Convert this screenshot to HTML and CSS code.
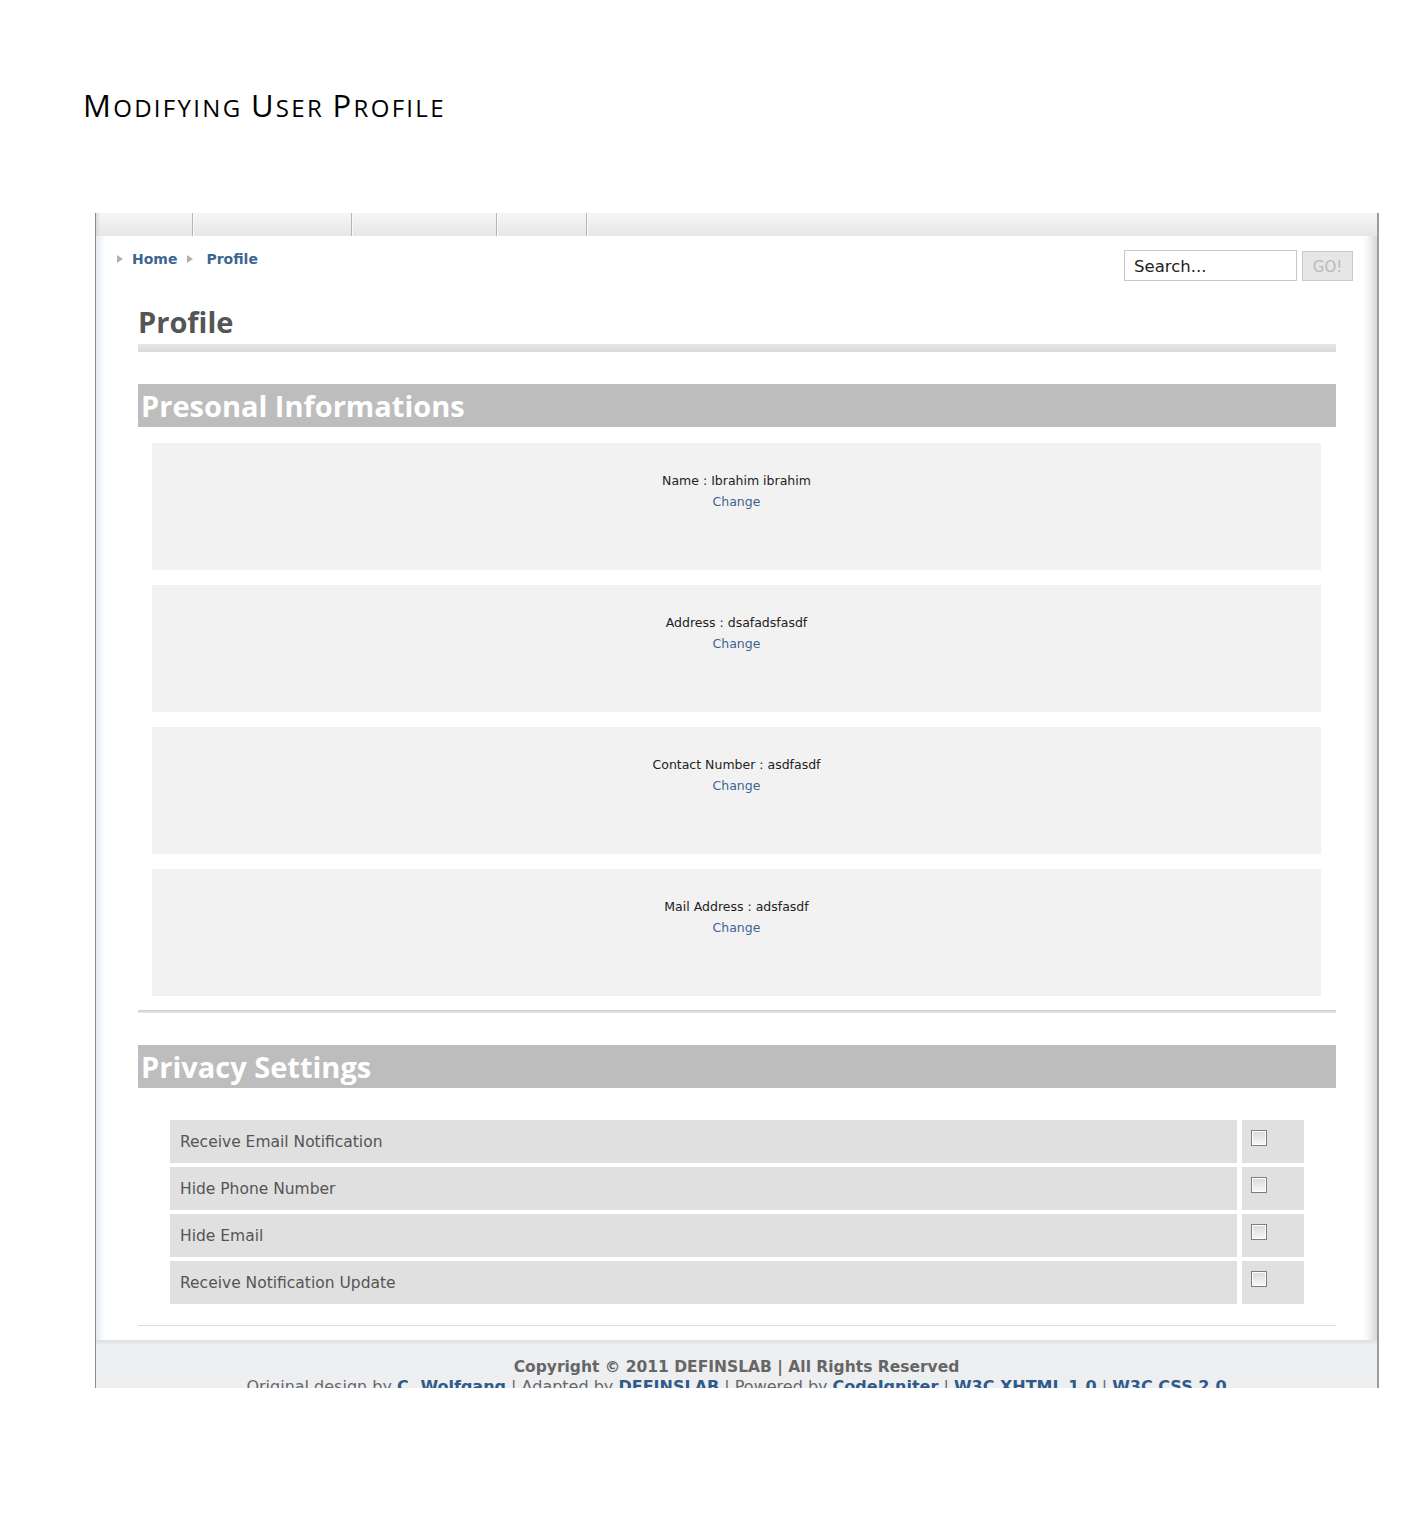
FILE: index.html
```html
<!DOCTYPE html>
<html lang="en">
<head>
<meta charset="utf-8">
<title>Modifying User Profile</title>
<link rel="stylesheet" href="styles.css">
</head>
<body>
<div class="page">
  <h1 class="doc-title"><span class="cap">M</span>odifying <span class="cap">U</span>ser <span class="cap">P</span>rofile</h1>

  <div class="shot">
    <div class="topnav">
      <span class="tab t1"></span><span class="tab t2"></span><span class="tab t3"></span><span class="tab t4"></span>
    </div>

    <div class="main">
      <div class="toprow">
        <nav class="crumbs">
          <span class="arr"></span><a class="crumb">Home</a>
          <span class="arr"></span><a class="crumb crumb-last">Profile</a>
        </nav>
        <form class="search">
          <input class="search-input" type="text" value="Search...">
          <button class="go" type="button">GO!</button>
        </form>
      </div>

      <div class="content">
        <h2 class="page-h">Profile</h2>
        <div class="page-bar"></div>

        <h3 class="band">Presonal Informations</h3>
        <div class="cards">
          <div class="card"><p class="card-text">Name : Ibrahim ibrahim</p><a class="change">Change</a></div>
          <div class="card"><p class="card-text">Address : dsafadsfasdf</p><a class="change">Change</a></div>
          <div class="card"><p class="card-text">Contact Number : asdfasdf</p><a class="change">Change</a></div>
          <div class="card"><p class="card-text">Mail Address : adsfasdf</p><a class="change">Change</a></div>
        </div>
        <div class="sep"></div>

        <h3 class="band">Privacy Settings</h3>
        <div class="privacy">
          <div class="plabel">Receive Email Notification</div><div class="pcheck"><input class="cb" type="checkbox"></div>
          <div class="plabel">Hide Phone Number</div><div class="pcheck"><input class="cb" type="checkbox"></div>
          <div class="plabel">Hide Email</div><div class="pcheck"><input class="cb" type="checkbox"></div>
          <div class="plabel">Receive Notification Update</div><div class="pcheck"><input class="cb" type="checkbox"></div>
        </div>
        <div class="hr"></div>
      </div>

      <footer class="foot">
        <p class="copy">Copyright © 2011 DEFINSLAB | All Rights Reserved</p>
        <p class="credits">Original design by <a>C. Wolfgang</a> | Adapted by <a>DEFINSLAB</a> | Powered by <a>CodeIgniter</a> | <a>W3C XHTML 1.0</a> | <a>W3C CSS 2.0</a></p>
      </footer>
    </div>
  </div>
</div>
</body>
</html>
```

FILE: styles.css
```css
* { box-sizing: border-box; }
html, body { margin: 0; background: #fff; }
body {
  width: 1414px;
  min-height: 1514px;
  font-family: "DejaVu Sans", Verdana, sans-serif;
  color: #222;
}
.page { padding-top: 84px; }

.doc-title {
  margin: 0;
  height: 45px;
  line-height: 42px;
  padding-left: 83px;
  font-family: "Open Sans", "Liberation Sans", sans-serif;
  font-weight: 400;
  font-size: 24px;
  text-transform: uppercase;
  letter-spacing: 2.3px;
  color: #000;
}
.doc-title .cap { font-size: 31px; }

.shot {
  margin: 84px 0 0 95px;
  width: 1284px;
  height: 1175px;
  overflow: hidden;
  border-left: 1px solid #8c8c8c;
  border-right: 2px solid #9c9c9c;
  background: #fff;
  box-shadow: inset 9px 0 7px -5px #e2e7ee, inset -12px 0 10px -6px #d6d6d6;
}

.topnav {
  height: 23px;
  display: flex;
  background: linear-gradient(#f6f6f6, #e6e6e6);
  box-shadow: inset 4px 0 3px -2px #d8d8d8;
}
.tab {
  display: block;
  height: 100%;
  border-right: 1px solid #b4b4b4;
  box-shadow: 1px 0 0 #fafafa;
}
.t1 { width: 97px; }
.t2 { width: 159px; }
.t3 { width: 145px; }
.t4 { width: 90px; }

.toprow {
  display: flex;
  justify-content: space-between;
  align-items: flex-start;
  padding: 14px 24px 0 21px;
}
.crumbs {
  display: flex;
  align-items: center;
  height: 17px;
  font-size: 14px;
  font-weight: 700;
}
.arr {
  width: 0;
  height: 0;
  border-left: 6px solid #b2b2b2;
  border-top: 4px solid transparent;
  border-bottom: 4px solid transparent;
  margin-right: 9px;
}
.crumb { color: #3d6591; margin-right: 10px; }
.crumb-last { margin-left: 4px; }

.search { display: flex; align-items: flex-start; margin: 0; }
.search-input {
  width: 173px;
  height: 31px;
  border: 1px solid #c8c8c8;
  padding: 2px 0 0 9px;
  font-family: "DejaVu Sans", Verdana, sans-serif;
  font-size: 16.5px;
  color: #222;
  background: #fff;
  outline: none;
}
.go {
  margin: 1px 0 0 5px;
  width: 51px;
  height: 30px;
  border: 1px solid #c9c9c9;
  background: #e6e6e6;
  color: #b9b9b9;
  font-family: "DejaVu Sans", Verdana, sans-serif;
  font-size: 15px;
  padding: 2px 0 0;
}

.content { margin: 0 41px 0 42px; }

.page-h {
  margin: 23px 0 0;
  line-height: 36px;
  font-family: "Open Sans", sans-serif;
  font-weight: 700;
  font-size: 29px;
  color: #555;
}
.page-bar {
  margin-top: 4px;
  height: 8px;
  background: linear-gradient(#e6e6e6, #d9d9d9);
}

.band {
  margin: 32px 0 0;
  height: 43px;
  line-height: 43px;
  padding-left: 3px;
  background: #bdbdbd;
  color: #fff;
  font-family: "Open Sans", sans-serif;
  font-weight: 700;
  font-size: 29px;
}

.cards {
  margin: 16px 15px 0 14px;
  display: flex;
  flex-direction: column;
  gap: 15px;
}
.card {
  height: 127px;
  background: #f2f2f2;
  padding-top: 27px;
  text-align: center;
  font-size: 12.5px;
  line-height: 21px;
}
.card-text { margin: 0; color: #222; }
.change { display: block; color: #3d6591; }

.sep {
  margin-top: 14px;
  height: 3px;
  background: linear-gradient(#d0d0d0, #dadada, #ececec);
}

.privacy {
  margin: 32px 32px 0;
  display: grid;
  grid-template-columns: 1fr 62px;
  gap: 4px 5px;
}
.plabel {
  height: 43px;
  line-height: 41px;
  padding: 2px 0 0 10px;
  background: #e0e0e0;
  color: #555;
  font-size: 15.5px;
}
.pcheck {
  height: 43px;
  background: #e0e0e0;
  padding: 10px 0 0 9px;
}
.cb {
  appearance: none;
  -webkit-appearance: none;
  display: block;
  margin: 0;
  width: 16px;
  height: 16px;
  border: 1px solid #7d7d7d;
  background: linear-gradient(#d9d9d9, #f7f7f7);
  box-shadow: inset 0 0 0 1px #fff;
}

.hr {
  margin-top: 21px;
  height: 1px;
  background: #dcdcdc;
}

.foot {
  margin-top: 14px;
  height: 120px;
  padding-top: 18px;
  background: linear-gradient(#dcdfe2 0, #eceef0 5px, #eef0f2 100%);
  text-align: center;
  font-size: 15.5px;
  line-height: 19px;
  color: #666;
}
.foot p { margin: 0; }
.copy { font-weight: 700; }
.credits { font-size: 16px; }
.credits a { font-weight: 700; color: #2f5b8a; }
```
